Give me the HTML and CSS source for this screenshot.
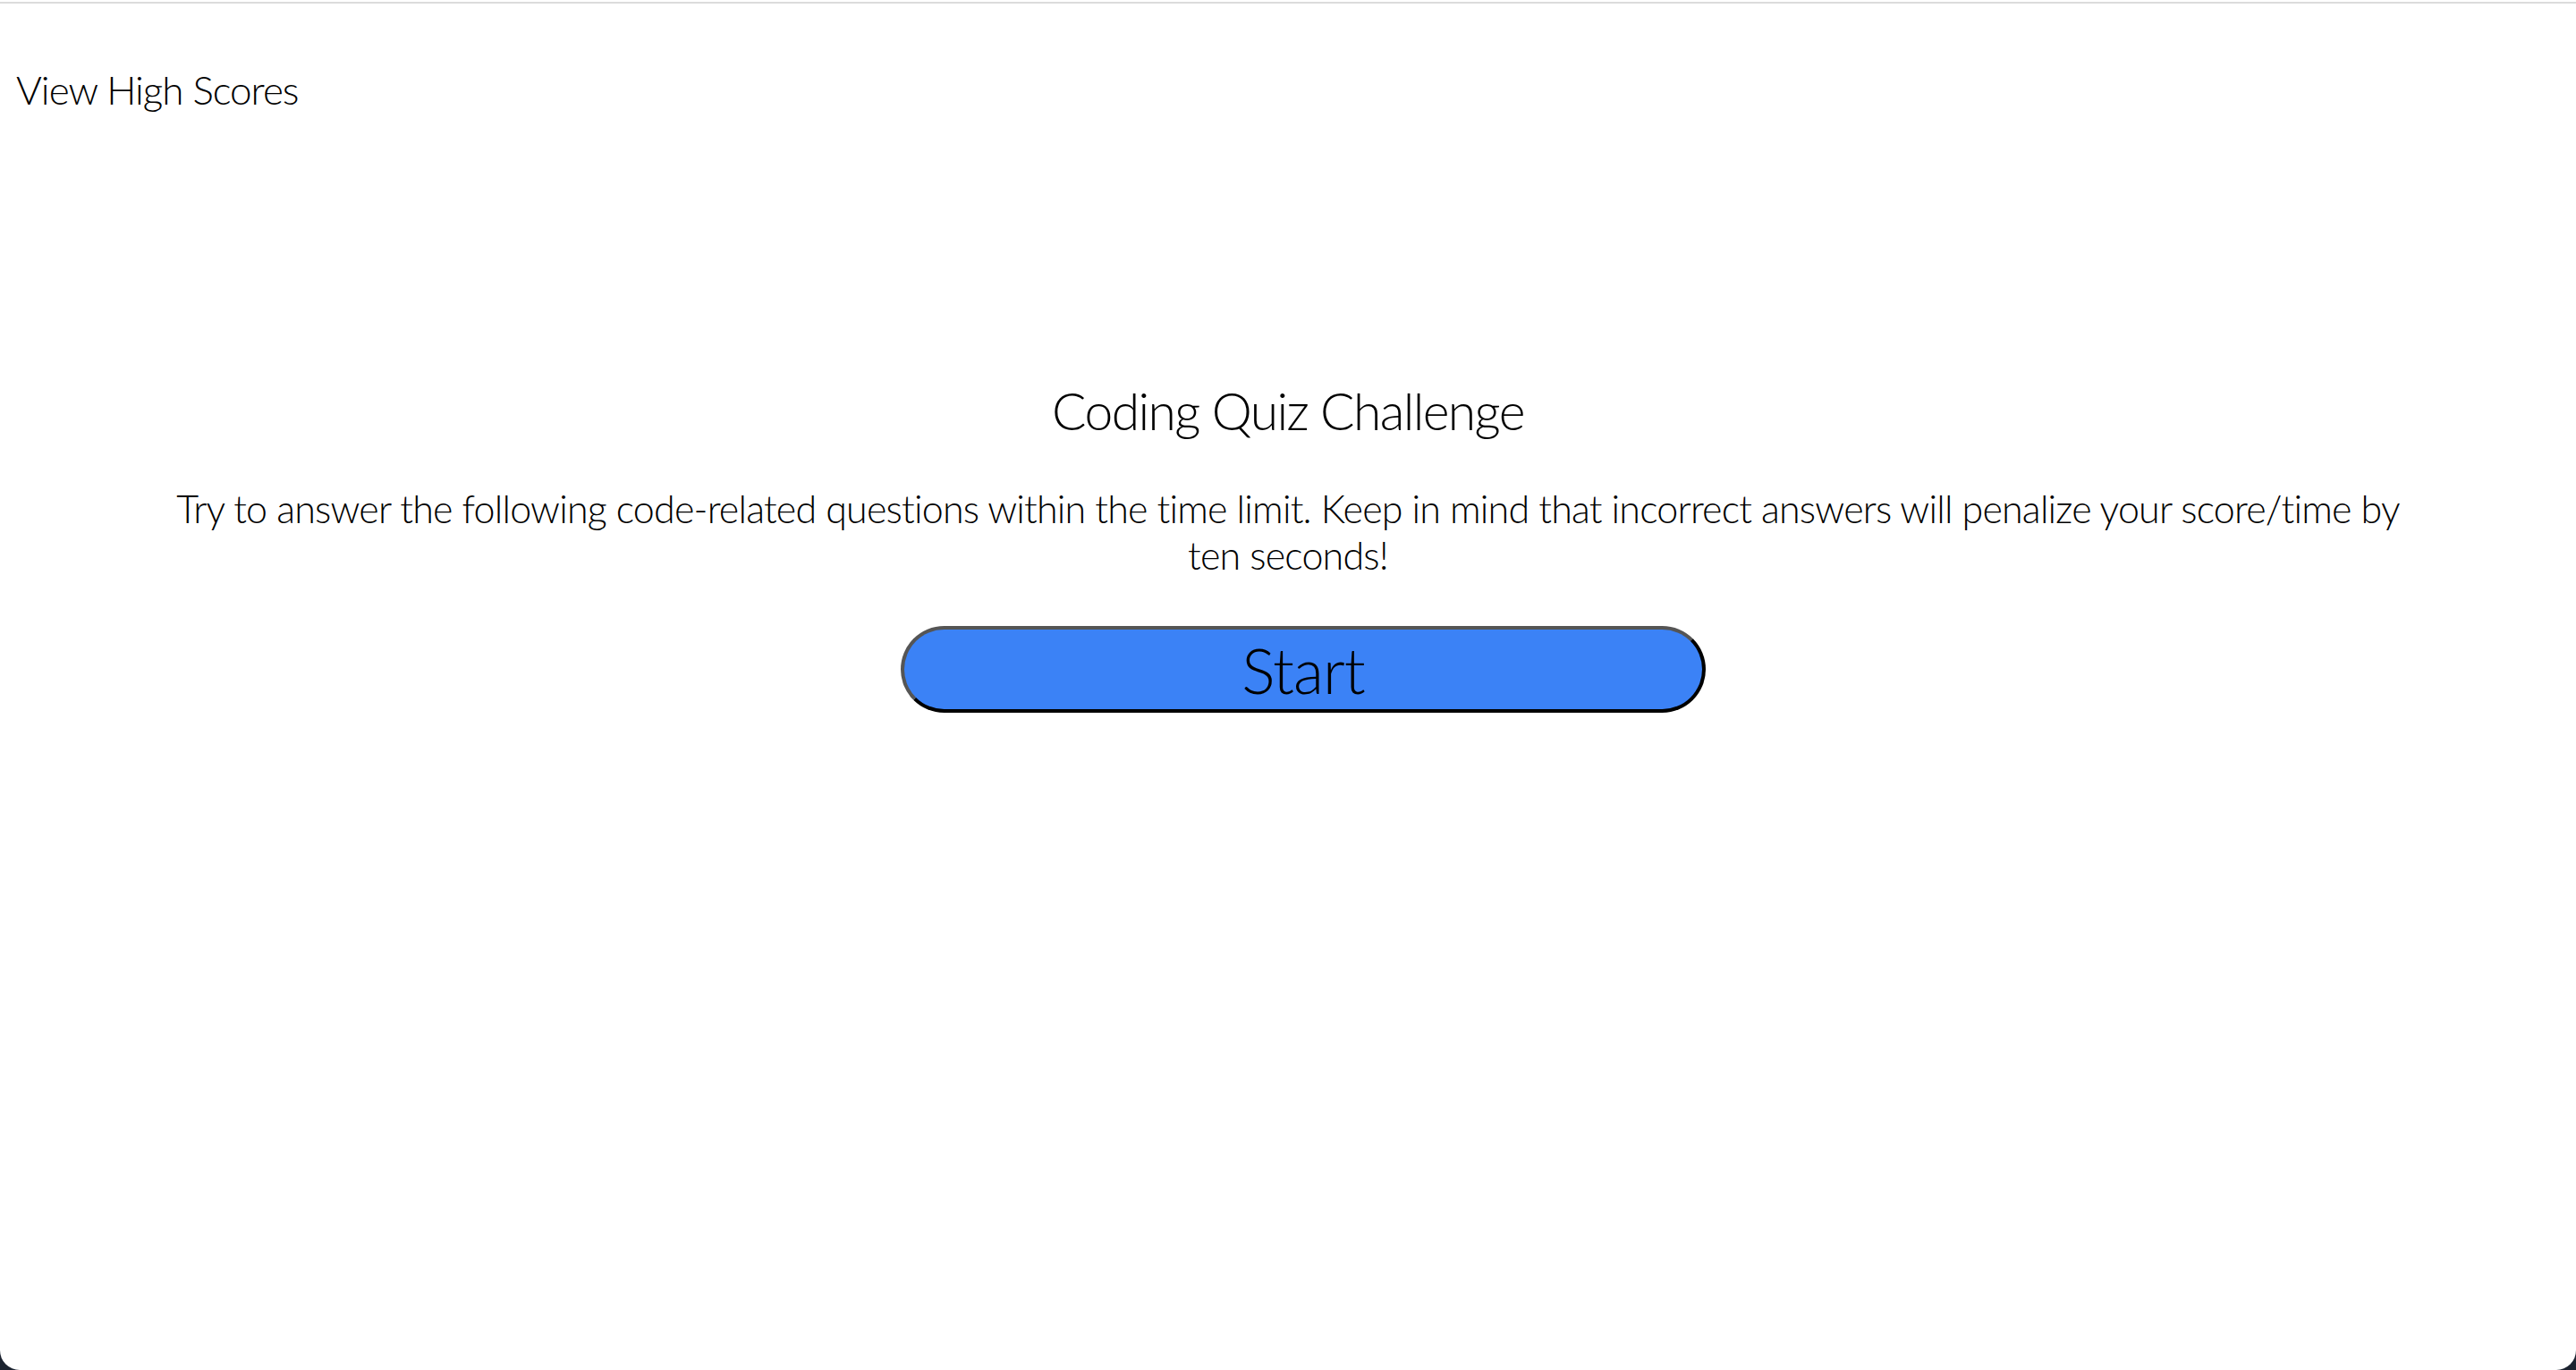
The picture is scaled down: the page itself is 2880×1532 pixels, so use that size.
FILE: index.html
```html
<!DOCTYPE html>
<html lang="en">
<head>
<meta charset="utf-8">
<title>Coding Quiz Challenge</title>
<link rel="stylesheet" href="styles.css">
</head>
<body>
<div class="window">
  <div class="topline"></div>
  <header class="header">
    <a class="scores-link" href="#">View High Scores</a>
  </header>
  <main class="intro">
    <h1 class="intro-title">Coding Quiz Challenge</h1>
    <p class="intro-text">Try to answer the following code-related questions within the time limit. Keep in mind that incorrect answers will penalize your score/time by ten seconds!</p>
    <button class="start-btn" type="button">Start</button>
  </main>
</div>
</body>
</html>
```

FILE: styles.css
```css
* { box-sizing: border-box; }

html, body {
  margin: 0;
  padding: 0;
  height: 100%;
}

body {
  background: #1c2330;
  font-family: "Lato", "Open Sans", sans-serif;
  font-weight: 300;
  color: #000;
  overflow: hidden;
}

.window {
  height: 1532px;
  background: #fff;
  border-radius: 0 0 22px 22px;
  display: flex;
  flex-direction: column;
}

.topline {
  margin-top: 2px;
  height: 2px;
  background: #dcdcdc;
}

.header {
  padding: 68px 0 0 18px;
}

.scores-link {
  font-size: 44px;
  line-height: 56px;
  color: #000;
  text-decoration: none;
  letter-spacing: -1px;
}

.intro {
  display: flex;
  flex-direction: column;
  align-items: center;
  padding-top: 295px;
}

.intro-title {
  margin: 0;
  font-size: 57px;
  font-weight: 300;
  line-height: 72px;
  letter-spacing: -1.6px;
}

.intro-text {
  margin: 48px 0 0;
  max-width: 2540px;
  text-align: center;
  font-size: 43px;
  line-height: 52px;
  letter-spacing: -0.8px;
}

.start-btn {
  margin-top: 53px;
  margin-left: 34px;
  width: 900px;
  height: 97px;
  border-radius: 49px;
  border: 4px solid;
  border-color: #555 #000 #000 #555;
  background: #3b82f6;
  font-family: inherit;
  font-weight: 300;
  font-size: 70px;
  line-height: 1;
  color: #000;
  padding: 0;
  letter-spacing: -1px;
  cursor: pointer;
}
```
